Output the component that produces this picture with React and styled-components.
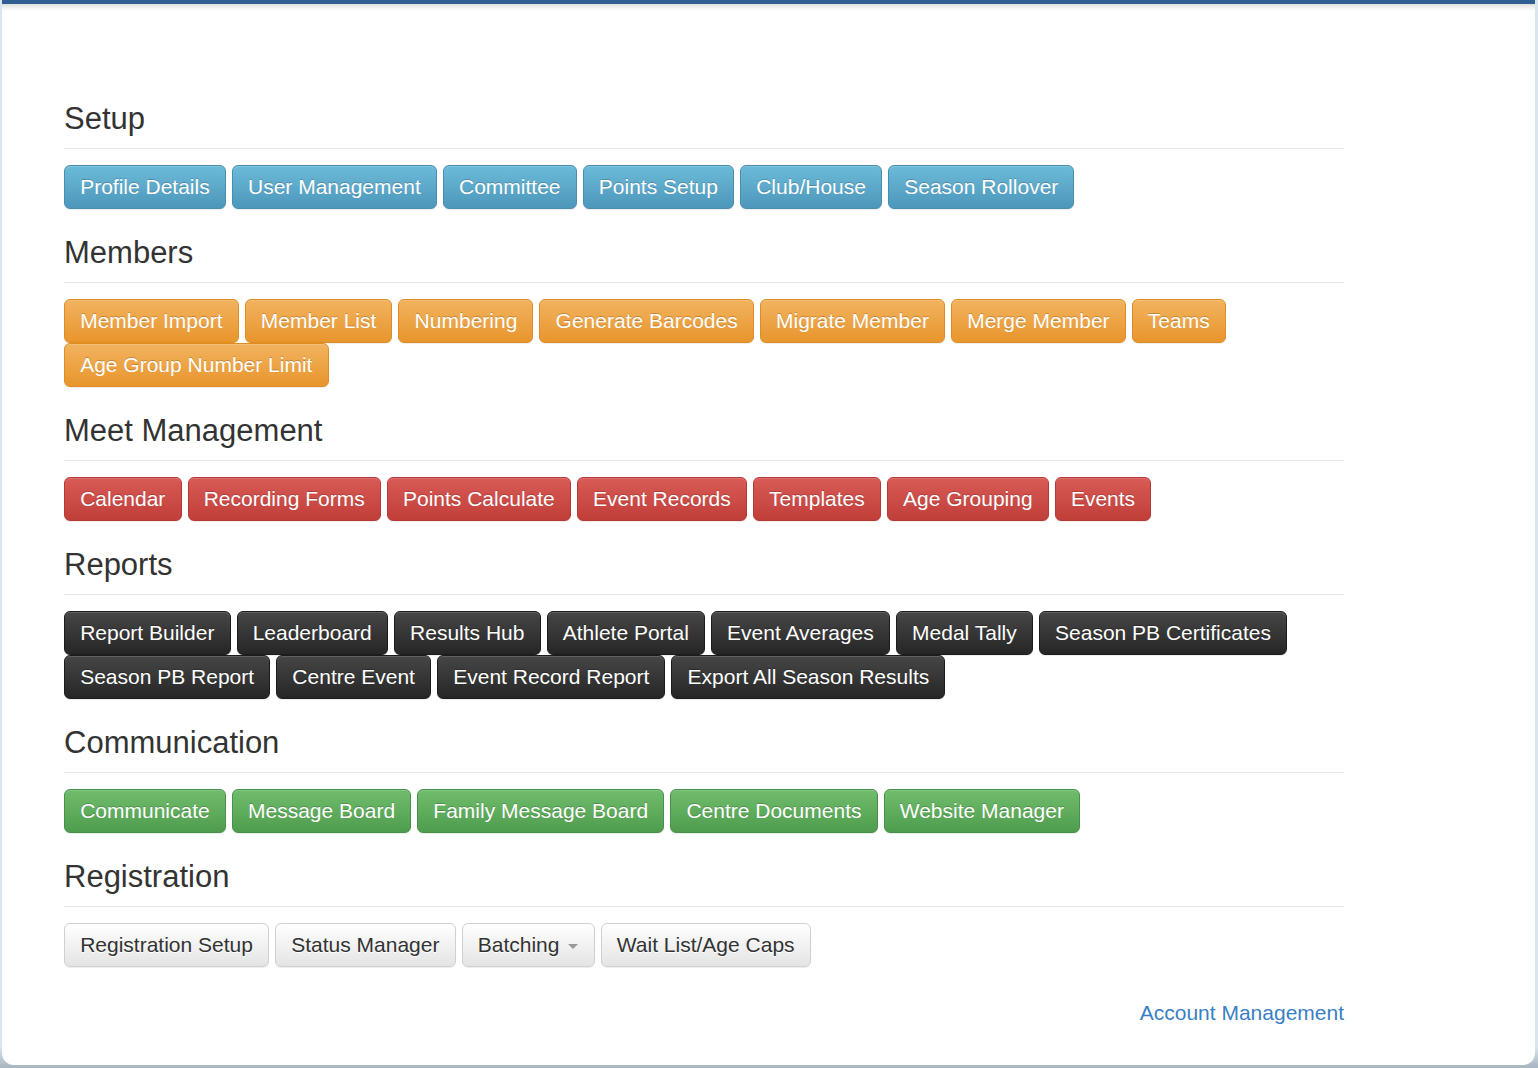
import React from 'react';
import styled, { createGlobalStyle, css } from 'styled-components';

const GlobalStyle = createGlobalStyle`
  html, body {
    margin: 0;
    padding: 0;
    background: #dbe5ed;
  }
  body {
    font-family: "Liberation Sans", Arial, Helvetica, sans-serif;
    color: #333;
  }
`;

const variants = {
  info: css`
    color: #fff;
    background-image: linear-gradient(to bottom, #6cbad9 0%, #4c97bb 100%);
    border-color: #4a8db0;
    text-shadow: 0 -1px 0 rgba(0, 0, 0, 0.2);
  `,
  warning: css`
    color: #fff;
    background-image: linear-gradient(to bottom, #f2b35f 0%, #e8952c 100%);
    border-color: #df8c22;
    text-shadow: 0 -1px 0 rgba(0, 0, 0, 0.2);
  `,
  danger: css`
    color: #fff;
    background-image: linear-gradient(to bottom, #d85b56 0%, #c13e39 100%);
    border-color: #b53a35;
    text-shadow: 0 -1px 0 rgba(0, 0, 0, 0.2);
  `,
  inverse: css`
    color: #fff;
    background-image: linear-gradient(to bottom, #464646 0%, #262626 100%);
    border-color: #1c1c1c;
    text-shadow: 0 -1px 0 rgba(0, 0, 0, 0.25);
  `,
  success: css`
    color: #fff;
    background-image: linear-gradient(to bottom, #6fbd6c 0%, #4f9c4e 100%);
    border-color: #48914a;
    text-shadow: 0 -1px 0 rgba(0, 0, 0, 0.2);
  `,
  default: css`
    color: #333;
    background-image: linear-gradient(to bottom, #ffffff 0%, #e4e4e4 100%);
    border-color: #d0d0d0;
    text-shadow: 0 1px 0 #fff;
  `,
};

const Frame = styled.div`
  min-height: 1068px;
  padding: 0 3px 3px 2px;
  box-sizing: border-box;
  background: linear-gradient(to bottom, #dbe5ed 0%, #dbe5ed 98%, #a7b5c0 100%);
`;

const Panel = styled.div`
  height: 1065px;
  box-sizing: border-box;
  background: #fff;
  border-top: 4px solid #2f5e93;
  border-radius: 0 0 12px 12px;
  box-shadow: inset 0 7px 6px -5px rgba(0, 0, 0, 0.18);
  padding: 71px 0 0 62px;
`;

const Content = styled.div`
  width: 1280px;
`;

const Section = styled.section``;

const Heading = styled.h3`
  margin: 27px 0 16px;
  padding-bottom: 13px;
  border-bottom: 1px solid #e8e8e8;
  font-size: 31px;
  line-height: 33px;
  font-weight: 400;
  color: #333;
`;

const ButtonRow = styled.div`
  display: flex;
  flex-wrap: wrap;
  column-gap: 6px;
  row-gap: 0;
`;

const Button = styled.a`
  display: inline-flex;
  align-items: center;
  box-sizing: border-box;
  height: 44px;
  padding: 9px 15.15px;
  font-size: 21px;
  line-height: 24px;
  border: 1px solid transparent;
  border-radius: 6px;
  text-decoration: none;
  white-space: nowrap;
  cursor: pointer;
  box-shadow: inset 0 1px 0 rgba(255, 255, 255, 0.15), 0 1px 1px rgba(0, 0, 0, 0.075);
  ${props => variants[props.$variant]}
`;

const Caret = styled.span`
  display: inline-block;
  width: 0;
  height: 0;
  margin-left: 9px;
  margin-top: 2px;
  border-top: 5px solid #999;
  border-left: 5px solid transparent;
  border-right: 5px solid transparent;
`;

const Footer = styled.div`
  display: flex;
  justify-content: flex-end;
  margin-top: 34px;
`;

const AccountLink = styled.a`
  font-size: 21px;
  line-height: 24px;
  color: #3a7fc3;
  text-decoration: none;
`;

const sections = [
  {
    title: 'Setup',
    variant: 'info',
    items: ['Profile Details', 'User Management', 'Committee', 'Points Setup', 'Club/House', 'Season Rollover'],
  },
  {
    title: 'Members',
    variant: 'warning',
    items: [
      'Member Import', 'Member List', 'Numbering', 'Generate Barcodes', 'Migrate Member',
      'Merge Member', 'Teams', 'Age Group Number Limit',
    ],
  },
  {
    title: 'Meet Management',
    variant: 'danger',
    items: ['Calendar', 'Recording Forms', 'Points Calculate', 'Event Records', 'Templates', 'Age Grouping', 'Events'],
  },
  {
    title: 'Reports',
    variant: 'inverse',
    items: [
      'Report Builder', 'Leaderboard', 'Results Hub', 'Athlete Portal', 'Event Averages', 'Medal Tally',
      'Season PB Certificates', 'Season PB Report', 'Centre Event', 'Event Record Report',
      'Export All Season Results',
    ],
  },
  {
    title: 'Communication',
    variant: 'success',
    items: ['Communicate', 'Message Board', 'Family Message Board', 'Centre Documents', 'Website Manager'],
  },
  {
    title: 'Registration',
    variant: 'default',
    items: ['Registration Setup', 'Status Manager', { label: 'Batching', dropdown: true }, 'Wait List/Age Caps'],
  },
];

const App = () => {
  return (
    <>
      <GlobalStyle />
      <Frame>
        <Panel>
          <Content>
            {sections.map(section => (
              <Section key={section.title}>
                <Heading>{section.title}</Heading>
                <ButtonRow>
                  {section.items.map(item => {
                    const label = typeof item === 'string' ? item : item.label;
                    return (
                      <Button key={label} $variant={section.variant}>
                        {label}
                        {item.dropdown && <Caret />}
                      </Button>
                    );
                  })}
                </ButtonRow>
              </Section>
            ))}
            <Footer>
              <AccountLink href="#">Account Management</AccountLink>
            </Footer>
          </Content>
        </Panel>
      </Frame>
    </>
  );
};

export default App;
